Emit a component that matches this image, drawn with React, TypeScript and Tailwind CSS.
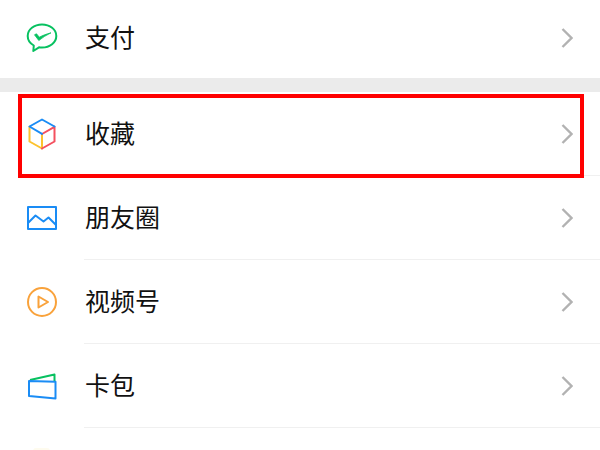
import type { ReactNode } from "react";

function PayIcon() {
  return (
    <svg width="32" height="30" viewBox="0 0 32 30" fill="none">
      <path d="M16 1.500C8.100 1.500 1.700 6.500 1.700 13c0 4 2.400 7.400 6.100 9.500L7.300 28 13 24.300c1 .2 2 .2 3 .2 7.900 0 14.300-5 14.300-11.500S23.900 1.500 16 1.500Z" stroke="#07c160" strokeWidth="2" strokeLinejoin="round" />
      <path d="M8.500 11.800 12.800 17.500C16.500 14.500 20.500 12 25 9.800 20.500 11 16.500 12.500 13.300 14.200L10.500 10.800Z" fill="#07c160" stroke="#07c160" strokeWidth="0.800" strokeLinejoin="round" />
    </svg>
  );
}

function BoxIcon() {
  return (
    <svg width="28" height="32" viewBox="0 0 28 32" fill="none" strokeWidth="2" strokeLinecap="round" strokeLinejoin="round">
      <path d="M1.500 8.800V23.500L14 30.500V16" stroke="#fcc22e" />
      <path d="M26.500 8.800V23.500L14 30.500M14 16 26.500 8.800" stroke="#f4505f" />
      <path d="M14 15.800 1.500 8.500 14 1.500 26.500 8.500" stroke="#1a8cf5" />
    </svg>
  );
}

function MomentsIcon() {
  return (
    <svg width="32" height="26" viewBox="0 0 32 26" fill="none" stroke="#1a8cf5" strokeWidth="2" strokeLinejoin="round">
      <rect x="2" y="2" width="28" height="22" />
      <path d="M2 18 9.500 10.500 17.500 16.500 22.500 12.500 30 20" />
    </svg>
  );
}

function ChannelIcon() {
  return (
    <svg width="32" height="32" viewBox="0 0 32 32" fill="none" stroke="#f9a23b" strokeWidth="2" strokeLinejoin="round">
      <circle cx="16" cy="16" r="14" />
      <path d="M12.500 10.500V21.500L22 16Z" />
    </svg>
  );
}

function WalletIcon() {
  return (
    <svg width="30" height="27" viewBox="0 0 30 27" fill="none" strokeWidth="2" strokeLinejoin="round">
      <path d="M3 7 27.500 1.500V8" stroke="#07c160" />
      <path d="M2 8 28.500 8.800V25.500L2 23Z" stroke="#1a8cf5" />
    </svg>
  );
}

function Chevron() {
  return (
    <svg width="12" height="20" viewBox="0 0 12 20" fill="none" stroke="#b2b2b2" strokeWidth="2.400">
      <path d="M1.500 1 10.500 10 1.500 19" />
    </svg>
  );
}

function Row({ icon, label, height, divider = true }: { icon: ReactNode; label: string; height: string; divider?: boolean }) {
  return (
    <div className={`flex items-stretch ${height}`}>
      <div className="flex w-[84px] shrink-0 items-center justify-center">{icon}</div>
      <div className={`flex flex-1 items-center justify-between pr-[27px] ${divider ? "border-b border-[#f0f0f0]" : ""}`}>
        <span className="mb-[3px] ml-[1px] text-[25px] leading-none text-[#111111]">{label}</span>
        <Chevron />
      </div>
    </div>
  );
}

export default function App() {
  return (
    <div
      className="relative h-[450px] w-[600px] overflow-hidden bg-white"
      style={{ fontFamily: '"Noto Sans CJK SC", "Noto Sans", sans-serif' }}
    >
      <Row icon={<PayIcon />} label="支付" height="h-[78px] pb-[3px]" divider={false} />
      <div className="h-[14px] bg-[#ebebeb]" />
      <Row icon={<BoxIcon />} label="收藏" height="h-[84px]" />
      <Row icon={<MomentsIcon />} label="朋友圈" height="h-[84px]" />
      <Row icon={<ChannelIcon />} label="视频号" height="h-[84px]" />
      <Row icon={<WalletIcon />} label="卡包" height="h-[84px]" />
      <div className="ml-[33px] mt-[20px] h-[3px] w-[17px] rounded-t-full bg-[#fefbee]" />
      <div className="absolute top-[94px] left-[18px] h-[84px] w-[566px] border-4 border-[#ff0000]" />
    </div>
  );
}
